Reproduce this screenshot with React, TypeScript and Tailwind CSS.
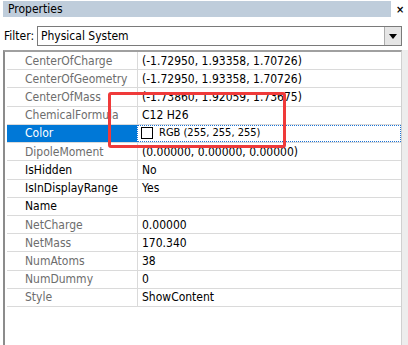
import React from "react";

type Row = { name: string; value: string; editable?: boolean; selected?: boolean };

const rows: Row[] = [
  { name: "CenterOfCharge", value: "(-1.72950, 1.93358, 1.70726)" },
  { name: "CenterOfGeometry", value: "(-1.72950, 1.93358, 1.70726)" },
  { name: "CenterOfMass", value: "(-1.73860, 1.92059, 1.73675)" },
  { name: "ChemicalFormula", value: "C12 H26" },
  { name: "Color", value: "RGB (255, 255, 255)", selected: true },
  { name: "DipoleMoment", value: "(0.00000, 0.00000, 0.00000)" },
  { name: "IsHidden", value: "No", editable: true },
  { name: "IsInDisplayRange", value: "Yes", editable: true },
  { name: "Name", value: "", editable: true },
  { name: "NetCharge", value: "0.00000" },
  { name: "NetMass", value: "170.340" },
  { name: "NumAtoms", value: "38" },
  { name: "NumDummy", value: "0" },
  { name: "Style", value: "ShowContent" },
];

export default function App() {
  return (
    <div
      className="w-[408px] h-[345px] bg-white relative overflow-hidden flex flex-col text-[12px] text-black"
      style={{ fontFamily: "Tahoma, 'DejaVu Sans Condensed', 'DejaVu Sans', sans-serif" }}
    >
      {/* Title bar */}
      <div className="flex items-center pl-[3px] pt-[1px]">
        <div className="w-[388px] h-[16px] bg-[#bfcddb] flex items-center pl-[5px] leading-none">
          Properties
        </div>
        <span className="ml-[5px] text-[11px] font-bold leading-none">×</span>
      </div>

      {/* Filter */}
      <div className="flex items-center mt-[9px] pl-[4px] h-[20px]">
        <span className="w-[33px]">Filter:</span>
        <div className="flex-1 mr-[6px] h-[20px] border border-[#7a7a7a] flex items-center pl-[3px]">
          <span className="flex-1">Physical System</span>
          <div className="w-[17px] h-[18px] bg-[#e5e5e5] border-l border-[#acacac] flex items-center justify-center">
            <svg width="8" height="5" viewBox="0 0 8 5">
              <path d="M0 0 H8 L4 5 Z" fill="#000" />
            </svg>
          </div>
        </div>
      </div>

      {/* Grid */}
      <div className="flex flex-1 mt-[4px]">
        <div className="ml-[3px] w-[399px] border-t-2 border-l-2 border-r border-t-[#a0a0a0] border-l-[#8c8c8c] border-r-[#d0d0d0] pl-[2px] flex flex-col">
          {rows.map((r) => (
            <div key={r.name} className="flex h-[18.23px] border-b border-[#dadada] shrink-0">
              <div
                className={`w-[130px] pl-[18px] flex items-center ${
                  r.selected ? "bg-[#0078d7] text-white" : r.editable ? "text-black" : "text-[#6d6d6d]"
                }`}
              >
                {r.name}
              </div>
              {r.selected ? (
                <div className="flex-1 border border-dotted border-[#1a73d6] flex items-center pl-[3px]">
                  <span className="w-[12px] h-[12px] border border-black bg-white" />
                  <span className="ml-[6px] text-[11px]">{r.value}</span>
                </div>
              ) : (
                <div className="flex-1 border-l border-[#dadada] flex items-center pl-[4px]">{r.value}</div>
              )}
            </div>
          ))}
        </div>
        <div className="flex-1 bg-[#ededed]" />
      </div>

      {/* Annotation */}
      <div className="absolute left-[108px] top-[92px] w-[178px] h-[56px] border-[3px] border-[#ef3a3a] rounded-[3px]" />
    </div>
  );
}
